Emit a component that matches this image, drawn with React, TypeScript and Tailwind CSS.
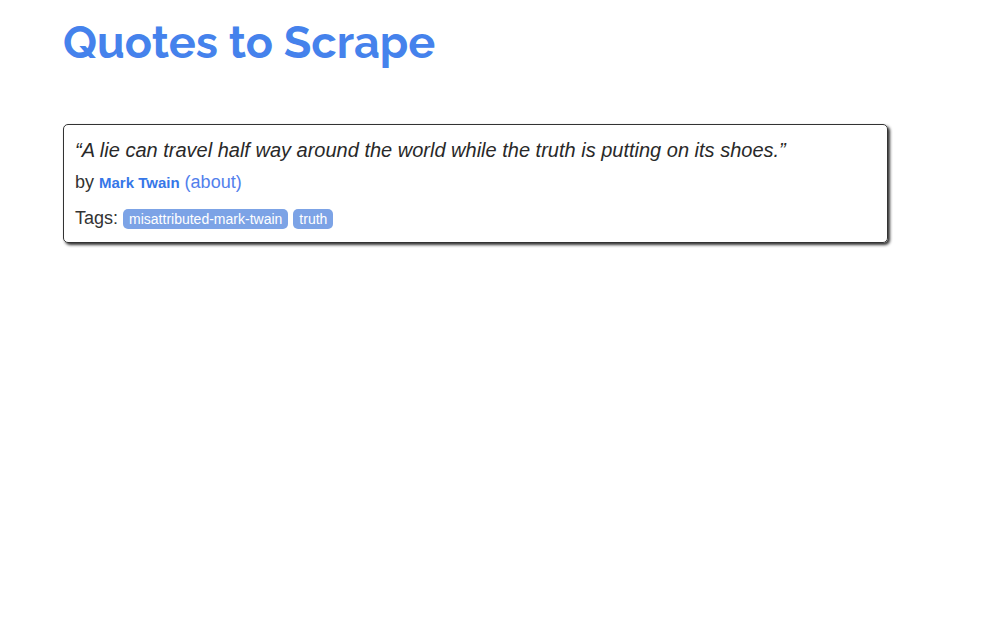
export default function App() {
  return (
    <div className="pt-[10px] pr-[106px] pb-8 pl-[63px] font-['Liberation_Sans',Arial,sans-serif] text-lg leading-[26px] text-[#333333]">
      <header className="mb-12">
        <h1 className="font-[Raleway,Lato,sans-serif] text-[45px] font-bold leading-[66px] text-[#4582ec]">
          <a href="#home">Quotes to Scrape</a>
        </h1>
      </header>
      <main>
        <article className="rounded-[5px] border border-[#333333] px-[11px] py-[10px] shadow-[2px_2px_3px_#333333]">
          <p className="mb-1 text-xl leading-[30px] italic text-[#292929]">
            “A lie can travel half way around the world while the truth is putting on its shoes.”
          </p>
          <p className="leading-[26px]">
            by <small className="text-[15px] font-bold text-[#3677e8]">Mark Twain</small>{" "}
            <a href="#about" className="text-[#5280ec]">(about)</a>
          </p>
          <div className="mt-[10px] mb-[2px] leading-6">
            Tags:{" "}
            <a href="#misattributed-mark-twain" className="rounded-[5px] bg-[#7ca3e6] px-[6px] py-[2px] text-sm text-white">misattributed-mark-twain</a>{" "}
            <a href="#truth" className="rounded-[5px] bg-[#7ca3e6] px-[6px] py-[2px] text-sm text-white">truth</a>
          </div>
        </article>
      </main>
    </div>
  );
}
